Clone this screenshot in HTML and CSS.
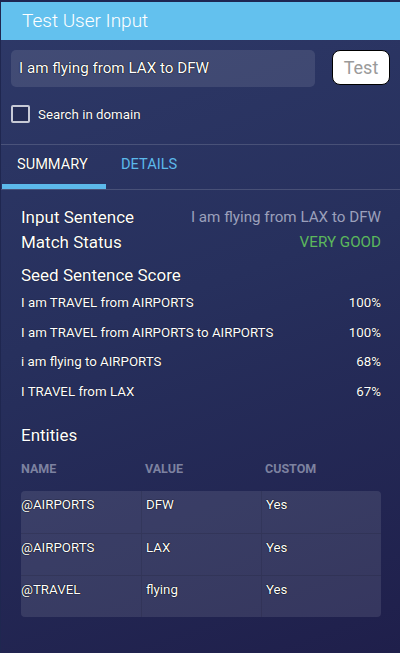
FILE: index.html
```html
<!DOCTYPE html>
<html>
<head>
<meta charset="utf-8">
<link rel="stylesheet" href="styles.css">
</head>
<body>
<div class="panel">
  <header class="header">Test User Input</header>
  <div class="controls">
    <div class="input-row">
      <div class="text-input">I am flying from LAX to DFW</div>
      <button class="test-btn">Test</button>
    </div>
    <label class="check-row"><span class="checkbox"></span><span>Search in domain</span></label>
  </div>
  <nav class="tabs">
    <div class="tab active">SUMMARY</div>
    <div class="tab">DETAILS</div>
  </nav>
  <section class="summary">
    <div class="kv"><span class="k">Input Sentence</span><span class="v muted">I am flying from LAX to DFW</span></div>
    <div class="kv"><span class="k">Match Status</span><span class="v good">VERY GOOD</span></div>
    <h3 class="sub">Seed Sentence Score</h3>
    <div class="score"><span>I am TRAVEL from AIRPORTS</span><span>100%</span></div>
    <div class="score"><span>I am TRAVEL from AIRPORTS to AIRPORTS</span><span>100%</span></div>
    <div class="score"><span>i am flying to AIRPORTS</span><span>68%</span></div>
    <div class="score"><span>I TRAVEL from LAX</span><span>67%</span></div>
    <h3 class="sub entities">Entities</h3>
    <div class="thead">
      <span>NAME</span><span>VALUE</span><span>CUSTOM</span>
    </div>
    <div class="tbody">
      <div class="tr"><span>@AIRPORTS</span><span>DFW</span><span>Yes</span></div>
      <div class="tr"><span>@AIRPORTS</span><span>LAX</span><span>Yes</span></div>
      <div class="tr"><span>@TRAVEL</span><span>flying</span><span>Yes</span></div>
    </div>
  </section>
</div>
</body>
</html>
```

FILE: styles.css
```css
* { box-sizing: border-box; }
html, body { margin: 0; padding: 0; }
body {
  width: 400px;
  height: 653px;
  overflow: hidden;
  font-family: Roboto, "Liberation Sans", sans-serif;
  color: #fff;
  background: linear-gradient(160deg, #2e3968 0%, #27305d 45%, #1f1f4b 100%);
}
.panel {
  border-top: 2px solid #1e2652;
  border-left: 1px solid #1f2750;
  height: 653px;
}
.header {
  background: #63c1ee;
  height: 38px;
  padding-left: 21px;
  font-size: 19px;
  font-weight: 300;
  line-height: 37px;
  color: #fff;
}
.controls { padding: 10px 10px 0 10px; }
.input-row { display: flex; align-items: flex-start; justify-content: space-between; }
.text-input {
  width: 304px;
  height: 37px;
  border-radius: 5px;
  background: rgba(255,255,255,0.1);
  font-size: 15.2px;
  line-height: 37px;
  padding-left: 8px;
  text-shadow: 0 0 1px #000, 0 0 1px #000;
}
.test-btn {
  width: 58px;
  height: 35px;
  border: 1px solid #000;
  border-radius: 8px;
  background: #fff;
  color: #9a9a9a;
  font-family: Roboto, "Liberation Sans", sans-serif;
  font-size: 18px;
  padding: 0;
}
.check-row {
  display: flex;
  align-items: center;
  gap: 8px;
  margin-top: 18px;
  font-size: 13.3px;
  text-shadow: 0 0 1px #000;
}
.checkbox {
  width: 19px;
  height: 18px;
  border: 2px solid #c7cad6;
  border-radius: 2px;
  background: rgba(0,0,0,0.15);
}
.tabs {
  margin-top: 21px;
  border-top: 1px solid rgba(255,255,255,0.15);
  border-bottom: 1px solid rgba(255,255,255,0.15);
  display: flex;
  height: 46px;
  padding-left: 1px;
}
.tab {
  font-size: 14.6px;
  line-height: 39px;
  color: #5cb9ea;
  padding: 0 15px;
  height: 44px;
}
.tab.active {
  color: #fff;
  width: 104px;
  border-bottom: 5px solid #5cb9ea;
  text-shadow: 0 0 1px #000;
}
.summary { padding: 15px 19px 0 20px; }
.kv {
  display: flex;
  justify-content: space-between;
  align-items: center;
  font-size: 17px;
  line-height: 25px;
  text-shadow: 0 0 1px #000;
}
.kv .v { font-size: 15.2px; }
.muted { color: #9ba0bb; text-shadow: none; }
.good { color: #5cb85c; text-shadow: none; }
.sub {
  margin: 8px 0 1px;
  font-size: 17px;
  font-weight: 400;
  line-height: 24px;
  text-shadow: 0 0 1px #000;
}
.score {
  display: flex;
  justify-content: space-between;
  font-size: 13.3px;
  line-height: 29.5px;
  text-shadow: 0 0 1px #000;
}
.sub.entities { margin-top: 17px; margin-bottom: 0; }
.thead, .tr {
  display: grid;
  grid-template-columns: 120px 120px 1fr;
}
.thead {
  font-size: 12.5px;
  font-weight: 700;
  color: #7d82a0;
  line-height: 20px;
  margin-top: 12px;
  margin-bottom: 12px;
}
.thead span:nth-child(n+2), .tr span:nth-child(n+2) { padding-left: 4px; }
.tbody {
  background: rgba(255,255,255,0.1);
  border-radius: 4px;
  overflow: hidden;
}
.tr {
  height: 42px;
  font-size: 13.3px;
  line-height: 28px;
  text-shadow: 0 0 1px #000, 0 0 1px #000;
}
.tr + .tr { border-top: 1px solid rgba(0,0,0,0.1); }
.tr span + span { border-left: 1px solid rgba(0,0,0,0.09); }
```
